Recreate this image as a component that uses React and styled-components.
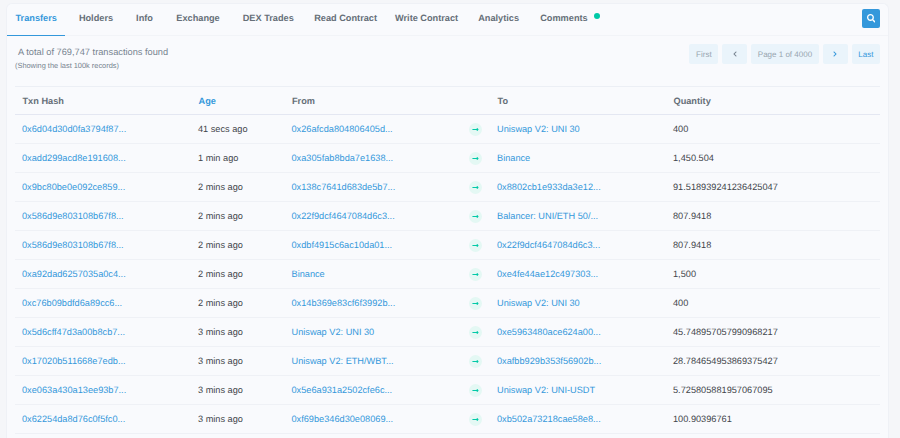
import styled, { createGlobalStyle } from 'styled-components';
import { FaSearch, FaChevronLeft, FaChevronRight, FaLongArrowAltRight } from 'react-icons/fa';

// the gap is the space in front of each tab label
const TABS = [
  { label: 'Transfers', gap: 0 },
  { label: 'Holders', gap: 14 },
  { label: 'Info', gap: 23 },
  { label: 'Exchange', gap: 23.4 },
  { label: 'DEX Trades', gap: 23 },
  { label: 'Read Contract', gap: 20.4 },
  { label: 'Write Contract', gap: 18 },
  { label: 'Analytics', gap: 20 },
  { label: 'Comments', gap: 21.2 },
];

const ROWS = [
  ['0x6d04d30d0fa3794f87...', '41 secs ago', '0x26afcda804806405d...', 'Uniswap V2: UNI 30', '400'],
  ['0xadd299acd8e191608...', '1 min ago', '0xa305fab8bda7e1638...', 'Binance', '1,450.504'],
  ['0x9bc80be0e092ce859...', '2 mins ago', '0x138c7641d683de5b7...', '0x8802cb1e933da3e12...', '91.518939241236425047'],
  ['0x586d9e803108b67f8...', '2 mins ago', '0x22f9dcf4647084d6c3...', 'Balancer: UNI/ETH 50/...', '807.9418'],
  ['0x586d9e803108b67f8...', '2 mins ago', '0xdbf4915c6ac10da01...', '0x22f9dcf4647084d6c3...', '807.9418'],
  ['0xa92dad6257035a0c4...', '2 mins ago', 'Binance', '0xe4fe44ae12c497303...', '1,500'],
  ['0xc76b09bdfd6a89cc6...', '2 mins ago', '0x14b369e83cf6f3992b...', 'Uniswap V2: UNI 30', '400'],
  ['0x5d6cff47d3a00b8cb7...', '3 mins ago', 'Uniswap V2: UNI 30', '0xe5963480ace624a00...', '45.748957057990968217'],
  ['0x17020b511668e7edb...', '3 mins ago', 'Uniswap V2: ETH/WBT...', '0xafbb929b353f56902b...', '28.784654953869375427'],
  ['0xe063a430a13ee93b7...', '3 mins ago', '0x5e6a931a2502cfe6c...', 'Uniswap V2: UNI-USDT', '5.725805881957067095'],
  ['0x62254da8d76c0f5fc0...', '3 mins ago', '0xf69be346d30e08069...', '0xb502a73218cae58e8...', '100.90396761'],
];

const GlobalStyle = createGlobalStyle`
  html, body {
    margin: 0;
    height: 438px;
    overflow: hidden;
    background: #f5f6f9;
    font-family: "Liberation Sans", Arial, sans-serif;
    text-rendering: geometricPrecision;
  }
`;

const Card = styled.div`
  margin: 3px 11px 0 6px;
  height: 435px;
  box-sizing: border-box;
  background: #f9fafd;
  border: 1px solid #eff1f6;
  border-bottom: 0;
  border-radius: 6px 6px 0 0;
`;

const Nav = styled.div`
  display: flex;
  align-items: stretch;
  height: 31px;
  padding-right: 8px;
  border-bottom: 1px solid #f2f4f8;
`;

const Tab = styled.div`
  position: relative;
  display: flex;
  align-items: center;
  padding: 0 ${(p) => (p.$active ? '8px' : '0')} 3px ${(p) => (p.$active ? '8.5px' : '0')};
  margin: 0 0 -1px ${(p) => p.$gap}px;
  font-size: 9.2px;
  font-weight: 700;
  color: ${(p) => (p.$active ? '#3498db' : '#666f78')};
  border-bottom: 1px solid ${(p) => (p.$active ? '#3498db' : 'transparent')};
`;

const Dot = styled.span`
  position: absolute;
  top: 8.5px;
  right: -12.7px;
  width: 6.4px;
  height: 6.4px;
  border-radius: 50%;
  background: #00c9a7;
`;

const SearchButton = styled.button`
  margin: 5px 0 0 auto;
  width: 18px;
  height: 19px;
  padding: 0;
  display: flex;
  align-items: center;
  justify-content: center;
  color: #fff;
  font-size: 8.5px;
  background: #3498db;
  border: 0;
  border-radius: 2px;
`;

const Body = styled.div`
  padding: 0 8px;
`;

const Summary = styled.div`
  display: flex;
  justify-content: space-between;
  height: 50px;
  border-bottom: 1px solid #eceff5;
`;

const SummaryText = styled.div`
  padding-top: 10px;
`;

const Total = styled.div`
  padding-left: 3px;
  font-size: 9.25px;
  line-height: 12px;
  color: #77838f;
`;

const Note = styled.div`
  margin-top: 3px;
  font-size: 7.4px;
  line-height: 10px;
  color: #77838f;
`;

const Pager = styled.div`
  display: flex;
  gap: 4px;
  padding-top: 8px;
`;

const PageItem = styled.div`
  height: 20px;
  width: ${(p) => (p.$square ? '25px' : 'auto')};
  display: flex;
  align-items: center;
  justify-content: center;
  padding: 0 ${(p) => (p.$square ? '0' : '6.6px')};
  font-size: 8px;
  color: ${(p) => (p.$on ? '#3498db' : '#97a4af')};
  background: #eaf4fb;
  border-radius: 2px;
  svg { font-size: 6px; color: ${(p) => (p.$on ? '#3498db' : '#77838f')}; }
`;

const Row = styled.div`
  display: grid;
  grid-template-columns: 176px 93.5px 176px 29.5px 176px 1fr;
  align-items: center;
  height: ${(p) => (p.$head ? '27px' : '28px')};
  border-bottom: 1px solid ${(p) => (p.$head ? '#e4e7f2' : '#eff1f6')};
  font-size: 9.2px;
`;

const HeadCell = styled.div`
  padding-left: 7.5px;
  font-weight: 700;
  color: ${(p) => (p.$active ? '#3498db' : '#666f78')};
`;

const LinkCell = styled.div`
  padding-left: 7px;
  color: #3498db;
  white-space: nowrap;
`;

const TextCell = styled.div`
  padding-left: 7px;
  color: #3f444a;
  white-space: nowrap;
`;

const ArrowCell = styled.div`
  display: flex;
  justify-content: center;
`;

const ArrowBadge = styled.span`
  width: 13px;
  height: 13px;
  display: flex;
  align-items: center;
  justify-content: center;
  border-radius: 50%;
  color: #00c9a7;
  background: #e4f8f4;
  font-size: 7px;
`;

export default function App() {
  return (
    <>
      <GlobalStyle />
      <Card>
        <Nav>
          {TABS.map((tab, i) => (
            <Tab key={tab.label} $active={i === 0} $gap={tab.gap}>
              {tab.label}
              {tab.label === 'Comments' && <Dot />}
            </Tab>
          ))}
          <SearchButton>
            <FaSearch />
          </SearchButton>
        </Nav>
        <Body>
          <Summary>
            <SummaryText>
              <Total>A total of 769,747 transactions found</Total>
              <Note>(Showing the last 100k records)</Note>
            </SummaryText>
            <Pager>
              <PageItem>First</PageItem>
              <PageItem $square><FaChevronLeft /></PageItem>
              <PageItem>Page 1 of 4000</PageItem>
              <PageItem $square $on><FaChevronRight /></PageItem>
              <PageItem $on>Last</PageItem>
            </Pager>
          </Summary>
          <Row $head>
            <HeadCell>Txn Hash</HeadCell>
            <HeadCell $active>Age</HeadCell>
            <HeadCell>From</HeadCell>
            <div />
            <HeadCell>To</HeadCell>
            <HeadCell>Quantity</HeadCell>
          </Row>
          {ROWS.map((r, i) => (
            <Row key={i}>
              <LinkCell>{r[0]}</LinkCell>
              <TextCell>{r[1]}</TextCell>
              <LinkCell>{r[2]}</LinkCell>
              <ArrowCell>
                <ArrowBadge><FaLongArrowAltRight /></ArrowBadge>
              </ArrowCell>
              <LinkCell>{r[3]}</LinkCell>
              <TextCell>{r[4]}</TextCell>
            </Row>
          ))}
        </Body>
      </Card>
    </>
  );
}
